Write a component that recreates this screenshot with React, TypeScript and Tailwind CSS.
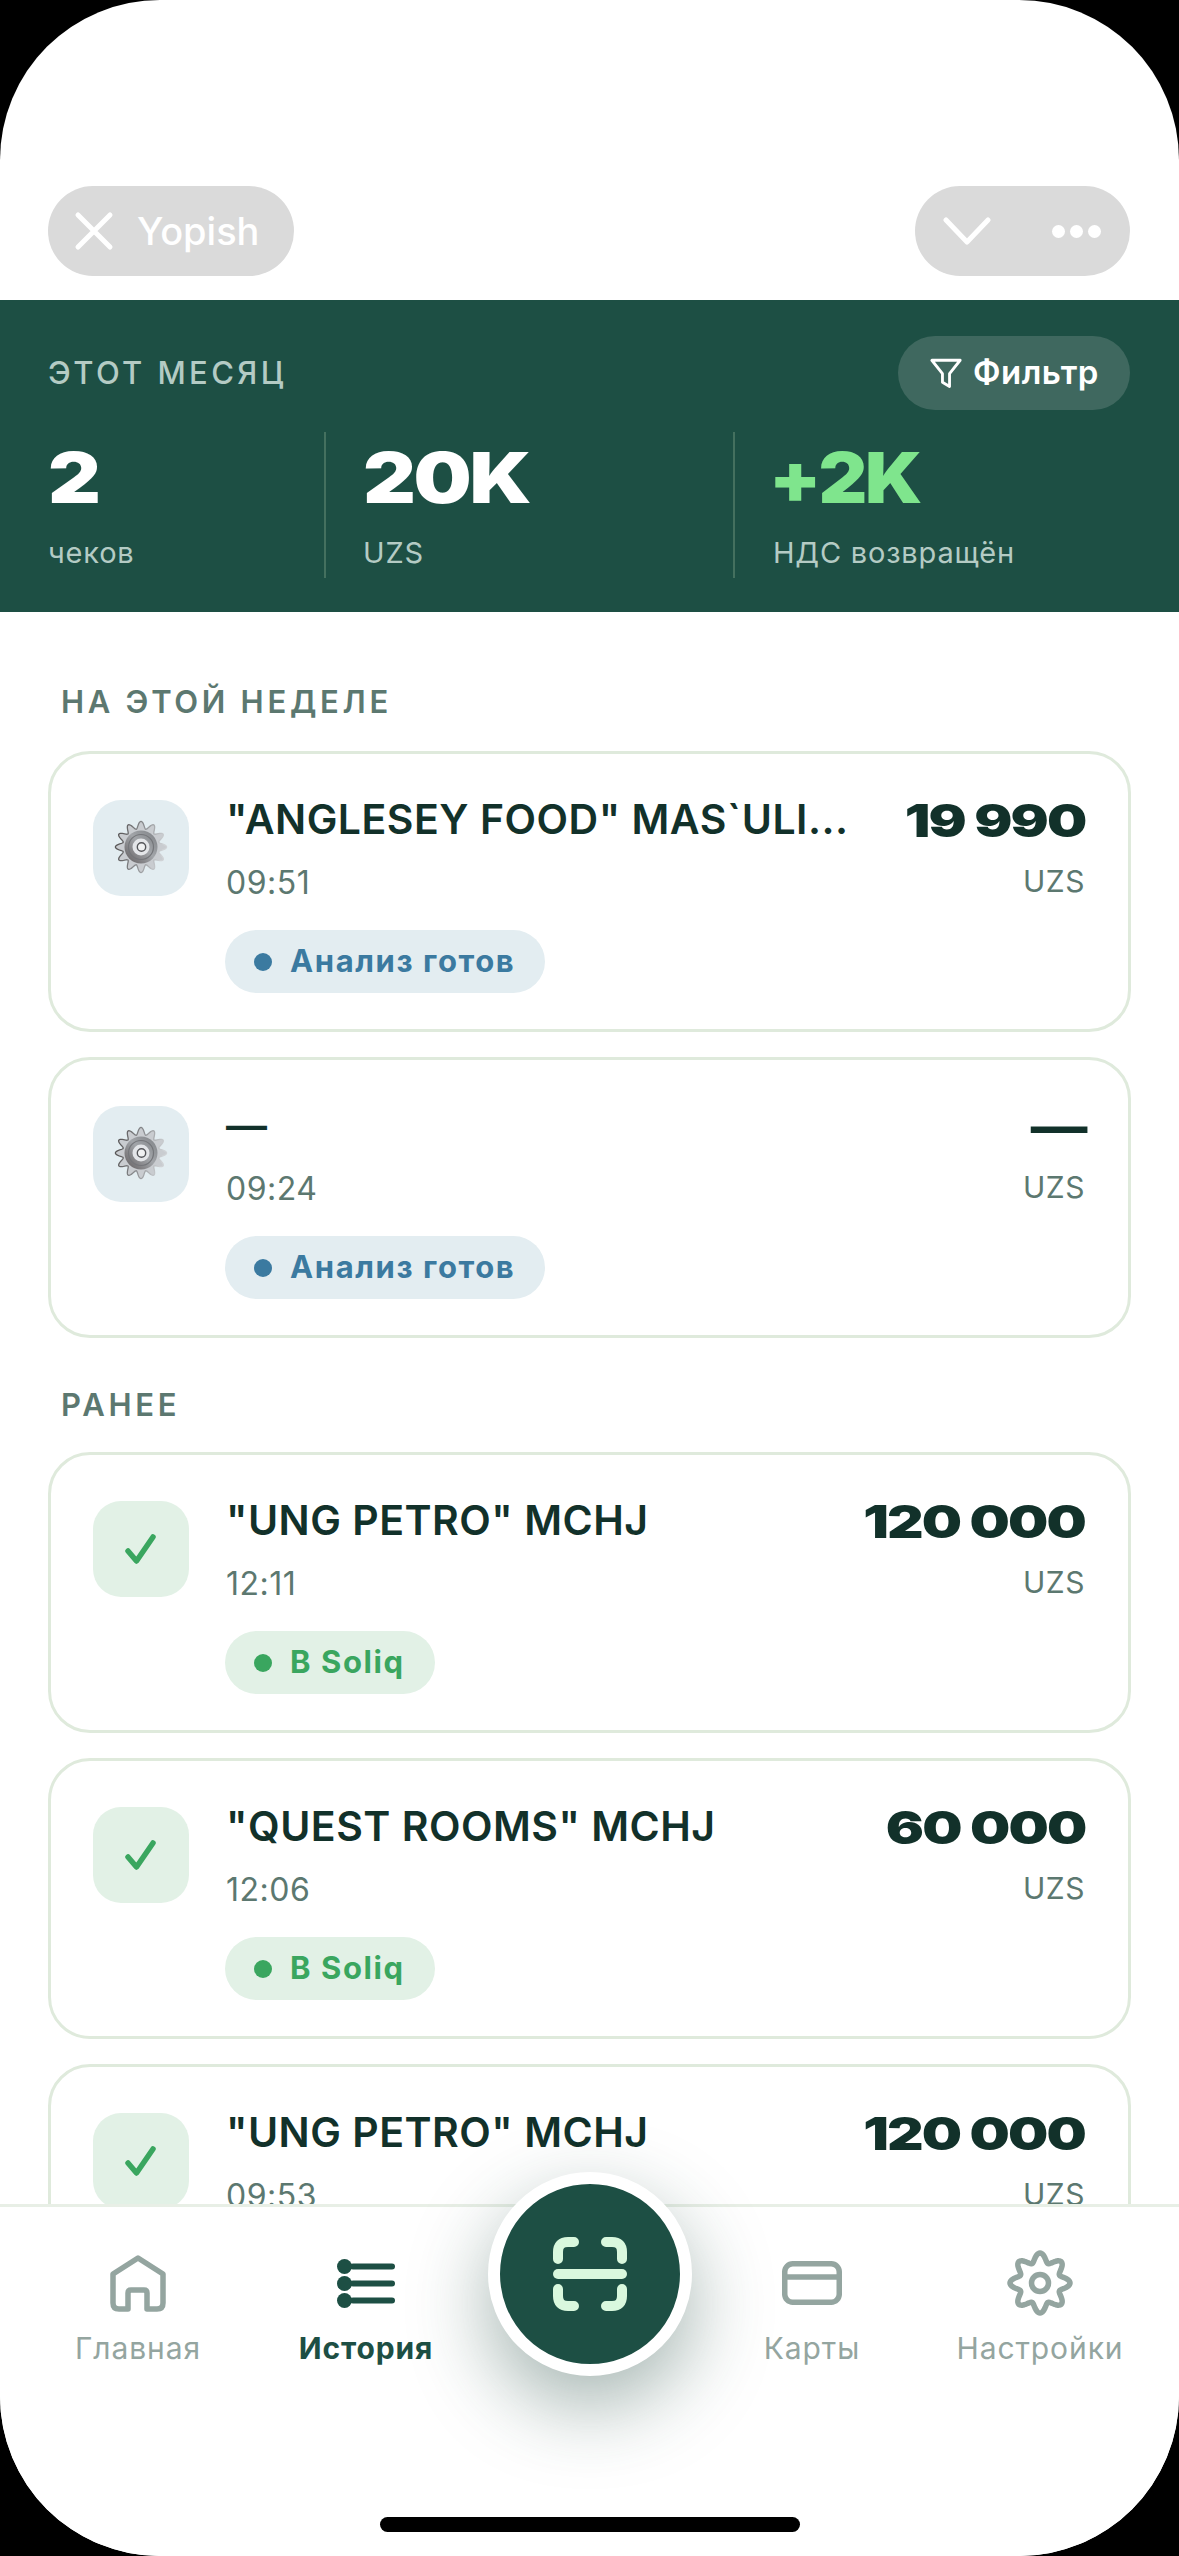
import * as React from 'react'

const font = { fontFamily: 'Inter, "Noto Sans", sans-serif' }

// wavy outline for the gear drawings: r = base + depth * cos(lobes * angle), first lobe on top
const lobedPath = (cx: number, cy: number, base: number, depth: number, lobes: number) => {
  const points: string[] = []
  for (let i = 0; i < 240; i++) {
    const t = (i / 240) * Math.PI * 2
    const r = base + depth * Math.cos(lobes * t)
    points.push(`${(cx + r * Math.sin(t)).toFixed(2)} ${(cy - r * Math.cos(t)).toFixed(2)}`)
  }
  return `M${points.join(' L')} Z`
}

const GearImage: React.FC = () => (
  <svg width="56" height="56" viewBox="0 0 56 56" className="mb-[3px]">
    <defs>
      <linearGradient id="edge" x1="0" y1="0" x2="1" y2="0.2">
        <stop offset="0%" stopColor="#4d4a4a" />
        <stop offset="55%" stopColor="#8b8d90" />
        <stop offset="100%" stopColor="#d0d3d6" />
      </linearGradient>
      <linearGradient id="disc" x1="0.1" y1="0.9" x2="0.9" y2="0.1">
        <stop offset="0%" stopColor="#6d6a6c" />
        <stop offset="55%" stopColor="#a2a5a9" />
        <stop offset="100%" stopColor="#85888c" />
      </linearGradient>
    </defs>
    <path d={lobedPath(28, 28, 22, 3.6, 12)} fill="#c9ccd0" stroke="url(#edge)" strokeWidth="1.3" />
    <circle cx="28" cy="28" r="16.5" fill="url(#disc)" />
    <circle cx="28" cy="28" r="12.5" fill="none" stroke="#74767a" strokeWidth="1.2" />
    <circle cx="28" cy="28" r="8.5" fill="#e3e5e8" />
    <circle cx="28.5" cy="28" r="4.2" fill="#f0f1f2" stroke="#55565a" strokeWidth="1.4" />
  </svg>
)

const CheckIcon: React.FC = () => (
  <svg width="34" height="34" viewBox="0 0 34 34" fill="none" stroke="#3aa65f" strokeWidth="5.5" strokeLinecap="round" strokeLinejoin="round">
    <path d="M4 19 L12.5 29 L29 5" />
  </svg>
)

type Receipt = {
  name: string
  time: string
  amount: string
  status: 'ready' | 'soliq'
}

const ReceiptCard: React.FC<{ receipt: Receipt }> = ({ receipt }) => {
  const ready = receipt.status === 'ready'
  return (
    <div className="flex h-[281px] shrink-0 rounded-[42px] border-[3px] border-[#dfeadc] bg-white pl-[42px] pr-[43px] pt-[41px]">
      <div className={`mt-[5px] flex h-[96px] w-[96px] shrink-0 items-center justify-center rounded-[28px] ${ready ? 'bg-[#e3edf1]' : 'bg-[#e2f1e6]'}`}>
        {ready ? <GearImage /> : <CheckIcon />}
      </div>
      <div className="ml-[37px] min-w-0 flex-1">
        <div className="flex h-[48px] items-start justify-between">
          <div className="whitespace-nowrap text-[41px] font-semibold leading-[48px] tracking-[0.5px] text-[#12312a]">{receipt.name}</div>
          <div className="origin-right scale-x-[1.26] whitespace-nowrap text-[45px] font-black leading-[52px] tracking-[-1.5px] text-[#12312a]">{receipt.amount}</div>
        </div>
        <div className="mt-[20px] flex items-start justify-between text-[#5c7870]">
          <span className="text-[32px] leading-[40px] tracking-[0.5px]">{receipt.time}</span>
          <span className="text-[30px] leading-[37px] tracking-[0.5px]">UZS</span>
        </div>
        <div className={`-ml-[1px] mt-[27px] inline-flex h-[63px] items-center rounded-full pl-[29px] pr-[30px] text-[31px] font-bold tracking-[1.6px] ${ready ? 'bg-[#e3edf1] text-[#3b7aa0]' : 'bg-[#e2f1e6] text-[#3aa65f]'}`}>
          <span className={`mr-[18px] h-[18px] w-[18px] rounded-full ${ready ? 'bg-[#3b7aa0]' : 'bg-[#3aa65f]'}`} />
          {ready ? 'Анализ готов' : 'B Soliq'}
        </div>
      </div>
    </div>
  )
}

const Stat: React.FC<{ value: string; label: string; green?: boolean; className: string }> = ({ value, label, green, className }) => (
  <div className={`flex h-[146px] flex-col pt-[11px] ${className}`}>
    <div className={`origin-left whitespace-nowrap text-[70px] font-black leading-[70px] tracking-[-2px] ${green ? '-ml-[4px] scale-x-[1.08] text-[#7fe58d]' : 'scale-x-[1.17] text-white'}`}>{value}</div>
    <div className="mt-[22px] whitespace-nowrap text-[29px] leading-[36px] tracking-[0.8px] text-[#b4cbc4]">{label}</div>
  </div>
)

const SectionLabel: React.FC<{ text: string; className: string }> = ({ text, className }) => (
  <div className={`pl-[13px] text-[31px] font-semibold leading-[38px] tracking-[3.7px] text-[#5c7870] ${className}`}>{text}</div>
)

const TabItem: React.FC<{ label: string; active?: boolean; className: string; children: React.ReactNode }> = ({ label, active, className, children }) => (
  <div className={`flex flex-col items-center ${className}`}>
    <div className="flex h-[72px] items-center justify-center">{children}</div>
    <div className={`mt-[11px] whitespace-nowrap text-[30px] leading-[36px] tracking-[0.9px] ${active ? 'font-bold text-[#1d4f44]' : 'text-[#94a5a0]'}`}>{label}</div>
  </div>
)

const App: React.FC = () => {
  const thisWeek: Receipt[] = [
    { name: '"ANGLESEY FOOD" MAS`ULI...', time: '09:51', amount: '19 990', status: 'ready' },
    { name: '—', time: '09:24', amount: '—', status: 'ready' },
  ]
  const earlier: Receipt[] = [
    { name: '"UNG PETRO" MCHJ', time: '12:11', amount: '120 000', status: 'soliq' },
    { name: '"QUEST ROOMS" MCHJ', time: '12:06', amount: '60 000', status: 'soliq' },
    { name: '"UNG PETRO" MCHJ', time: '09:53', amount: '120 000', status: 'soliq' },
  ]

  return (
    <div className="h-[2556px] w-[1179px] bg-black" style={font}>
      <div className="relative flex h-full flex-col overflow-hidden rounded-[160px] bg-white">
        <div className="flex h-[300px] shrink-0 items-start justify-between pl-[48px] pr-[49px] pt-[186px]">
          <div className="flex h-[90px] w-[246px] items-center rounded-full bg-[#dadada] pl-[26px] text-[38px] font-medium text-white">
            <svg width="40" height="40" viewBox="0 0 40 40" fill="none" stroke="white" strokeWidth="5" strokeLinecap="round">
              <path d="M4 4 L36 36 M36 4 L4 36" />
            </svg>
            <span className="ml-[23px]">Yopish</span>
          </div>
          <div className="flex h-[90px] w-[215px] items-center justify-between rounded-full bg-[#dadada] pl-[28px] pr-[29px]">
            <svg width="48" height="30" viewBox="0 0 48 30" fill="none" stroke="white" strokeWidth="5" strokeLinecap="round" strokeLinejoin="round">
              <path d="M3 4 L24 26 L45 4" />
            </svg>
            <div className="flex gap-[5px]">
              <span className="h-[13px] w-[13px] rounded-full bg-white" />
              <span className="h-[13px] w-[13px] rounded-full bg-white" />
              <span className="h-[13px] w-[13px] rounded-full bg-white" />
            </div>
          </div>
        </div>

        <div className="h-[312px] shrink-0 bg-[#1d4f44] pl-[48px] pr-[49px] pt-[36px]">
          <div className="flex h-[74px] items-center justify-between">
            <div className="text-[31px] font-medium tracking-[3.4px] text-[#b4cbc4]">ЭТОТ МЕСЯЦ</div>
            <div className="flex h-[74px] w-[232px] items-center justify-center rounded-full bg-[#3f685f] text-[33px] font-semibold tracking-[0.5px] text-white">
              <svg width="34" height="34" viewBox="0 0 24 24" fill="none" stroke="white" strokeWidth="2" strokeLinejoin="round" className="mr-[10px]">
                <path d="M2 3 H22 L14.5 12.5 V21.5 L9.5 18.5 V12.5 Z" />
              </svg>
              Фильтр
            </div>
          </div>
          <div className="mt-[22px] flex">
            <Stat value="2" label="чеков" className="w-[276px]" />
            <Stat value="20K" label="UZS" className="w-[409px] border-l-[2px] border-[#44705f] pl-[37px]" />
            <Stat value="+2K" label="НДС возвращён" green className="border-l-[2px] border-[#44705f] pl-[38px]" />
          </div>
        </div>

        <div className="min-h-0 flex-1 overflow-hidden px-[48px]">
          <SectionLabel text="НА ЭТОЙ НЕДЕЛЕ" className="mt-[71px]" />
          <div className="mt-[30px] flex flex-col gap-[25px]">
            {thisWeek.map((r) => (
              <ReceiptCard key={r.time} receipt={r} />
            ))}
          </div>
          <SectionLabel text="РАНЕЕ" className="mt-[48px]" />
          <div className="mt-[28px] flex flex-col gap-[25px]">
            {earlier.map((r) => (
              <ReceiptCard key={r.time} receipt={r} />
            ))}
          </div>
        </div>

        <div className="h-[352px] shrink-0 border-t-[3px] border-[#e8efe6] bg-white pt-[40px]">
          <div className="flex">
            <TabItem label="Главная" className="w-[276px]">
              <svg width="56" height="57" viewBox="0 0 56 57" fill="none" stroke="#94a5a0" strokeWidth="5.5" strokeLinejoin="round">
                <path d="M3 19 L28 3 L53 19 V48 Q53 54 47 54 H37 V38 Q37 35 34 35 H21 Q18 35 18 38 V54 H9 Q3 54 3 48 Z" />
              </svg>
            </TabItem>
            <TabItem label="История" active className="w-[180px]">
              <svg width="58" height="49" viewBox="0 0 58 49" fill="#1d4f44">
                <circle cx="7.5" cy="7.5" r="7.5" />
                <circle cx="7.5" cy="24.5" r="7.5" />
                <circle cx="7.5" cy="41.5" r="7.5" />
                <rect x="13" y="4.5" width="45" height="6" rx="3" />
                <rect x="13" y="21.5" width="45" height="6" rx="3" />
                <rect x="13" y="38.5" width="45" height="6" rx="3" />
              </svg>
            </TabItem>
            <div className="w-[267px]" />
            <TabItem label="Карты" className="w-[178px]">
              <svg width="60" height="44" viewBox="0 0 60 44" fill="none" stroke="#94a5a0" strokeWidth="5.5">
                <rect x="2.75" y="2.75" width="54.5" height="38.5" rx="8" />
                <path d="M3 16 H57" />
              </svg>
            </TabItem>
            <TabItem label="Настройки" className="w-[278px]">
              <svg width="66" height="66" viewBox="0 0 66 66" fill="none" stroke="#94a5a0" strokeWidth="5.5" strokeLinejoin="round">
                <path d={lobedPath(33, 33, 25.5, 4.5, 8)} />
                <circle cx="33" cy="33" r="8.5" />
              </svg>
            </TabItem>
          </div>
        </div>

        {/* floating scan button */}
        <div className="absolute left-[488px] top-[2172px] flex h-[204px] w-[204px] items-center justify-center rounded-full border-[12px] border-white bg-[#1d4f44] shadow-[0_30px_80px_rgba(30,70,60,0.4)]">
          <svg width="74" height="74" viewBox="0 0 74 74" fill="none" stroke="#d9f8de" strokeWidth="10" strokeLinecap="round">
            <path d="M5 22 V15 Q5 5 15 5 H21" />
            <path d="M53 5 H59 Q69 5 69 15 V22" />
            <path d="M5 52 V59 Q5 69 15 69 H21" />
            <path d="M53 69 H59 Q69 69 69 59 V52" />
            <path d="M5 37 H69" />
          </svg>
        </div>

        <div className="absolute bottom-[24px] left-[380px] h-[15px] w-[420px] rounded-full bg-black" />
      </div>
    </div>
  )
}

export default App
